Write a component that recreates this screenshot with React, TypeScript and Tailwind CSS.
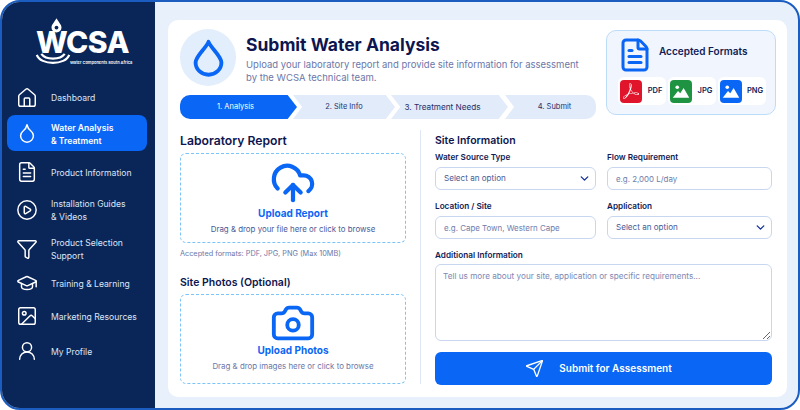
import { Camera, ChevronDown, CirclePlay, CloudUpload, Droplet, FileText, Funnel, GraduationCap, House, Image, Send, UserRound } from "lucide-react";
import { SiAdobeacrobatreader } from "react-icons/si";

const navItems = [
  { label: ["Dashboard"], icon: House, rowClass: "h-[35px]" },
  { label: ["Water Analysis", "& Treatment"], icon: Droplet, rowClass: "h-[36px]", active: true },
  { label: ["Product Information"], icon: FileText, rowClass: "h-[42px]" },
  { label: ["Installation Guides", "& Videos"], icon: CirclePlay, rowClass: "h-[33px]" },
  { label: ["Product Selection", "Support"], icon: Funnel, rowClass: "h-[45px]" },
  { label: ["Training & Learning"], icon: GraduationCap, rowClass: "h-[24px]" },
  { label: ["Marketing Resources"], icon: Image, rowClass: "h-[42px]" },
  { label: ["My Profile"], icon: UserRound, rowClass: "h-[28px]" },
];

const steps = [
  { label: "1. Analysis", className: "w-[117px] pr-[6px] text-[7.5px] rounded-l-[10px] bg-[#0a66f5] text-white [clip-path:polygon(0_0,92%_0,100%_50%,92%_100%,0_100%)]" },
  { label: "2. Site Info", className: "w-[102px] -ml-[4px] text-[7.4px] bg-[#e1ebfa] text-[#1f2f6b] [clip-path:polygon(0_0,91%_0,100%_50%,91%_100%,0_100%,9%_50%)]" },
  { label: "3. Treatment Needs", className: "w-[117px] -ml-[4px] pr-[14px] text-[8.2px] bg-[#e1ebfa] text-[#1f2f6b] [clip-path:polygon(0_0,92%_0,100%_50%,92%_100%,0_100%,8%_50%)]" },
  { label: "4. Submit", className: "w-[91px] -ml-[3px] pl-[8px] text-[7.5px] rounded-r-[10px] bg-[#e1ebfa] text-[#1f2f6b] [clip-path:polygon(0_0,100%_0,100%_100%,0_100%,10%_50%)]" },
];

function PictureGlyph() {
  return (
    <svg viewBox="0 0 24 24" className="h-[18px] w-[18px]" fill="white">
      <circle cx="7" cy="7" r="2.4" />
      <path d="M1 21 L8 12 L11 15 L15.5 8 L23 21 Z" />
    </svg>
  );
}

function FormatChip({ name, tile, children }: { name: string; tile: string; children: React.ReactNode }) {
  return (
    <div className="flex h-[28px] w-[48px] items-center gap-[3px] rounded-md bg-white pl-[2px]">
      <div className={`flex h-[23px] w-[22px] shrink-0 items-center justify-center rounded-[4px] ${tile}`}>{children}</div>
      <span className="w-[20px] text-center text-[7.5px] font-semibold text-[#101c55]">{name}</span>
    </div>
  );
}

function Sidebar() {
  return (
    <aside className="flex w-[153px] shrink-0 flex-col bg-[#0a2558]">
      <div className="relative h-[78px] shrink-0">
        <svg viewBox="0 0 24 24" className="absolute left-[47px] top-[15px] h-[16px] w-[15px]" fill="white">
          <path d="M12 1 C15 7 20 11 20 16 A8 8 0 0 1 4 16 C4 11 9 7 12 1 Z" />
          <circle cx="12" cy="16" r="3" fill="#0a2558" />
        </svg>
        <span className="absolute left-[34px] top-[25px] text-[30px] font-extrabold leading-[30px] tracking-[-0.6px] text-white">WCSA</span>
        <svg viewBox="0 0 40 20" className="absolute left-[33px] top-[51px] h-[18px] w-[36px]" fill="none" stroke="white" strokeWidth="2.4">
          <path d="M2 2 C6 14 34 14 38 2" />
          <path d="M7 1 C12 8 28 8 33 1" />
        </svg>
        <span className="absolute left-[68px] top-[58px] whitespace-nowrap text-[4px] font-semibold leading-[6px] text-white">Water Components South Africa</span>
      </div>
      <nav className="flex flex-col">
        {navItems.map((item) => {
          const Icon = item.icon;
          return (
            <div
              key={item.label[0]}
              className={`ml-[5px] mr-[8px] flex items-center gap-[13px] rounded-lg pl-[9px] ${item.rowClass} ${item.active ? "bg-[#0a66f5] font-semibold text-white" : "text-[#dbe5f7]"}`}
            >
              <Icon size={22} strokeWidth={1.6} className="shrink-0 text-white" />
              <div className={`whitespace-nowrap text-[8.6px] leading-[13px] ${item.active ? "mt-[3px]" : "mt-[2px]"}`}>
                {item.label.map((line) => (
                  <div key={line}>{line}</div>
                ))}
              </div>
            </div>
          );
        })}
      </nav>
    </aside>
  );
}

function Dropzone({ icon, title, hint, boxClass, hintClass }: { icon: React.ReactNode; title: string; hint: string; boxClass: string; hintClass: string }) {
  return (
    <div className={`flex flex-col items-center justify-center rounded-md border border-dashed border-[#7cc4f7] ${boxClass}`}>
      {icon}
      <div className="mt-[1px] text-[10px] font-bold leading-[15px] text-[#0a66f5]">{title}</div>
      <div className={`mt-[2px] text-[7.9px] leading-[12px] ${hintClass}`}>{hint}</div>
    </div>
  );
}

function Label({ text }: { text: string }) {
  return <div className="text-[8.2px] font-semibold leading-[12px] text-[#101c55]">{text}</div>;
}

function SelectBox() {
  return (
    <div className="mt-[4px] flex h-[23px] items-center justify-between rounded-md border border-[#c9d6f0] pl-[8px] pr-[4px] text-[8.1px] text-[#4a5a96]">
      Select an option
      <ChevronDown size={13} strokeWidth={2.5} className="text-[#14309a]" />
    </div>
  );
}

function TextBox({ placeholder }: { placeholder: string }) {
  return (
    <input
      placeholder={placeholder}
      className="mt-[4px] block h-[23px] w-full rounded-md border border-[#c9d6f0] px-[8px] text-[7.9px] outline-none placeholder:text-[#6f7cab]"
    />
  );
}

export default function App() {
  return (
    <div className="h-[410px] w-[800px] bg-white [font-family:Inter,'Liberation_Sans',sans-serif]">
      <div className="flex h-full overflow-hidden rounded-[20px] border-2 border-[#1a5cbf] bg-[#e8f0fc]">
        <Sidebar />
        <main className="min-w-0 flex-1 py-[18px] pl-[13px] pr-[11px]">
          <div className="h-[377px] w-[619px] rounded-[10px] bg-white pl-[12px] pt-[9px] pr-[11px]">
            <div className="flex gap-[10px]">
              <div className="w-[416px]">
                <div className="flex gap-[10px]">
                  <div className="flex h-[57px] w-[56px] shrink-0 items-center justify-center rounded-full bg-[#e3eefc]">
                    <svg viewBox="0 0 24 29" className="h-[38px] w-[31px]" fill="none" stroke="#0a66f5" strokeWidth="3" strokeLinejoin="round">
                      <path d="M12 2 C14 7 22 13 22 18 A10 9.5 0 0 1 2 18 C2 13 10 7 12 2 Z" />
                    </svg>
                  </div>
                  <div>
                    <h1 className="mt-[6px] text-[17.5px] font-bold leading-[20px] text-[#0d1650]">Submit Water Analysis</h1>
                    <p className="mt-[3px] w-[335px] text-[9.5px] leading-[13px] text-[#6c77a8]">
                      Upload your laboratory report and provide site information for assessment by the WCSA technical team.
                    </p>
                  </div>
                </div>
                <div className="mt-[9px] flex">
                  {steps.map((step) => (
                    <div key={step.label} className={`flex h-[24px] items-center justify-center ${step.className}`}>
                      {step.label}
                    </div>
                  ))}
                </div>
              </div>
              <div className="mt-[1px] h-[85px] w-[170px] rounded-[10px] border border-[#bcdcf8] bg-[#f1f5fd] pl-[11px] pt-[6px]">
                <div className="flex h-[36px] items-center gap-[6px]">
                  <FileText size={36} strokeWidth={2} className="-ml-[1px] shrink-0 text-[#0a66f5]" />
                  <span className="-mt-[8px] whitespace-nowrap text-[10px] font-semibold text-[#101c55]">Accepted Formats</span>
                </div>
                <div className="mt-[4px] flex gap-[2px]">
                  <FormatChip name="PDF" tile="bg-[#e0142a]">
                    <SiAdobeacrobatreader size={16} color="white" />
                  </FormatChip>
                  <FormatChip name="JPG" tile="bg-[#1e9443]">
                    <PictureGlyph />
                  </FormatChip>
                  <FormatChip name="PNG" tile="bg-[#0a66f5]">
                    <PictureGlyph />
                  </FormatChip>
                </div>
              </div>
            </div>

            <div className="mt-[14px] flex">
              <section className="w-[226px] shrink-0">
                <h2 className="text-[12.2px] font-semibold leading-[15px] text-[#0d1650]">Laboratory Report</h2>
                <div className="mt-[5px]">
                  <Dropzone
                    boxClass="h-[90px] pb-[2px]"
                    hintClass="text-[#4a5a96]"
                    icon={<CloudUpload size={46} strokeWidth={2.2} className="-mb-[1px] text-[#0a66f5]" />}
                    title="Upload Report"
                    hint="Drag & drop your file here or click to browse"
                  />
                </div>
                <p className="mt-[5px] text-[7.3px] leading-[12px] text-[#6c77a8]">Accepted formats: PDF, JPG, PNG (Max 10MB)</p>
                <h2 className="mt-[15px] text-[10.5px] font-semibold leading-[15px] text-[#0d1650]">Site Photos (Optional)</h2>
                <div className="mt-[4px]">
                  <Dropzone
                    boxClass="h-[90px] pb-[2px]"
                    hintClass="text-[#6c77a8]"
                    icon={<Camera size={46} strokeWidth={2} className="-my-[4px] text-[#0a66f5]" />}
                    title="Upload Photos"
                    hint="Drag & drop images here or click to browse"
                  />
                </div>
              </section>
              <div className="mx-[14px] mt-[-3px] h-[254px] w-px shrink-0 bg-[#dfe6f4]" />
              <section className="w-[337px]">
                <h2 className="text-[10.5px] font-semibold leading-[15px] text-[#0d1650]">Site Information</h2>
                <div className="mt-[3px] grid grid-cols-[161px_165px] gap-x-[11px] gap-y-[10px]">
                  <div>
                    <Label text="Water Source Type" />
                    <SelectBox />
                  </div>
                  <div>
                    <Label text="Flow Requirement" />
                    <TextBox placeholder="e.g. 2,000 L/day" />
                  </div>
                  <div>
                    <Label text="Location / Site" />
                    <TextBox placeholder="e.g. Cape Town, Western Cape" />
                  </div>
                  <div>
                    <Label text="Application" />
                    <SelectBox />
                  </div>
                </div>
                <div className="mt-[10px]">
                  <Label text="Additional Information" />
                  <textarea
                    placeholder="Tell us more about your site, application or specific requirements..."
                    className="mt-[3px] block h-[77px] w-full rounded-md border border-[#c9d6f0] px-[7px] py-[5px] text-[8.2px] leading-[12px] outline-none placeholder:text-[#7d88b3]"
                  />
                </div>
                <button className="mt-[11px] flex h-[33px] w-full items-center justify-center gap-[15px] rounded-md bg-[#0a66f5] pr-[10px] text-[10px] font-semibold text-white">
                  <Send size={19} strokeWidth={1.7} />
                  Submit for Assessment
                </button>
              </section>
            </div>
          </div>
        </main>
      </div>
    </div>
  );
}
